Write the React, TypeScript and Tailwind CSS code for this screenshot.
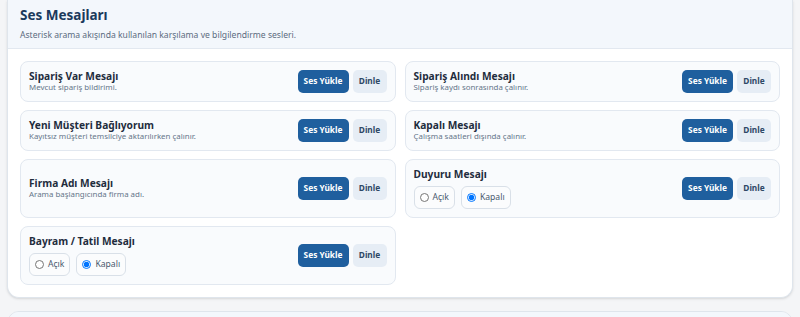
import { useState } from "react";

type Item = {
  title: string;
  desc?: string;
  toggle?: boolean;
};

const items: Item[] = [
  { title: "Sipariş Var Mesajı", desc: "Mevcut sipariş bildirimi." },
  { title: "Sipariş Alındı Mesajı", desc: "Sipariş kaydı sonrasında çalınır." },
  { title: "Yeni Müşteri Bağlıyorum", desc: "Kayıtsız müşteri temsilciye aktarılırken çalınır." },
  { title: "Kapalı Mesajı", desc: "Çalışma saatleri dışında çalınır." },
  { title: "Firma Adı Mesajı", desc: "Arama başlangıcında firma adı." },
  { title: "Duyuru Mesajı", toggle: true },
  { title: "Bayram / Tatil Mesajı", toggle: true },
];

const Toggle = ({ name }: { name: string }) => {
  const [value, setValue] = useState("kapali");
  return (
    <div className="flex gap-[6px] mt-[6px]">
      <label className="flex items-center gap-[4px] h-[23px] px-[5px] border border-[#d9e0e8] rounded-md bg-[#fbfcfd] text-[8.6px] text-[#4a5a6e]">
        <input
          type="radio"
          name={name}
          checked={value === "acik"}
          onChange={() => setValue("acik")}
          className="w-[9px] h-[9px] m-0"
        />
        Açık
      </label>
      <label className="flex items-center gap-[4px] h-[23px] px-[5px] border border-[#d9e0e8] rounded-md bg-[#fbfcfd] text-[8.6px] text-[#4a5a6e]">
        <input
          type="radio"
          name={name}
          checked={value === "kapali"}
          onChange={() => setValue("kapali")}
          className="w-[9px] h-[9px] m-0"
        />
        Kapalı
      </label>
    </div>
  );
};

const MessageRow = ({ item }: { item: Item }) => (
  <div className="flex items-center justify-between px-2 py-2 min-h-[41px] border border-[#e2e8f0] rounded-lg bg-[#f9fbfd]">
    <div>
      <h4 className="text-[10.2px] leading-[12px] font-bold text-[#1f2d3d]">{item.title}</h4>
      {item.desc && <p className="text-[7.9px] leading-[11px] text-[#66768a]">{item.desc}</p>}
      {item.toggle && <Toggle name={item.title} />}
    </div>
    <div className="flex gap-[4px]">
      <button className="w-[51px] h-[23px] rounded-[5px] bg-[#1f5f9e] text-white text-[8.3px] font-bold">
        Ses Yükle
      </button>
      <button className="w-[34px] h-[23px] rounded-[5px] bg-[#e6edf5] text-[#2e4866] text-[8.3px] font-bold">
        Dinle
      </button>
    </div>
  </div>
);

export default function App() {
  return (
    <div
      className="min-h-screen bg-[#f4f5f7] px-[7px] pb-4"
      style={{ fontFamily: '"Noto Sans", "Open Sans", sans-serif' }}
    >
      {/* Ses Mesajları */}
      <div className="bg-white border border-t-0 border-[#dfe5ec] rounded-b-xl shadow-sm overflow-hidden">
        <div className="bg-[#f3f7fc] border-b border-[#e2e8f0] px-3 pt-[5px] h-[49px]">
          <h2 className="text-[13.5px] leading-[20px] font-bold text-[#1b3a5c]">Ses Mesajları</h2>
          <p className="text-[8.6px] leading-[14px] text-[#5b6b80] mt-[3px]">
            Asterisk arama akışında kullanılan karşılama ve bilgilendirme sesleri.
          </p>
        </div>
        <div className="grid grid-cols-2 gap-x-[9px] gap-y-2 p-3">
          {items.map((item) => (
            <MessageRow key={item.title} item={item} />
          ))}
        </div>
      </div>

      {/* next card */}
      <div className="mt-[13px] bg-white border border-[#dfe5ec] rounded-xl overflow-hidden">
        <div className="bg-[#f3f7fc] h-[49px]" />
      </div>
    </div>
  );
}
